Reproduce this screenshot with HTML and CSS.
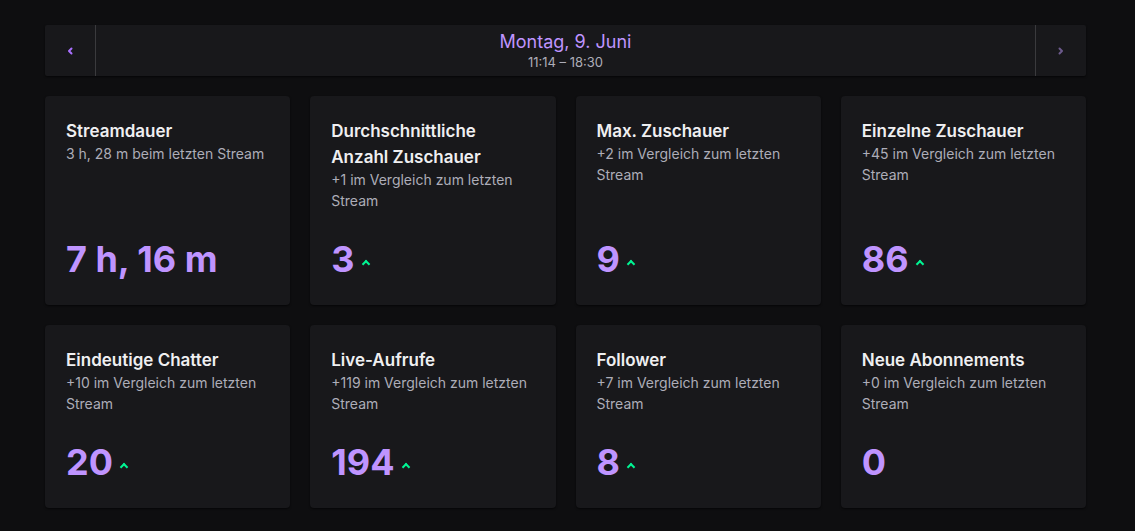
FILE: index.html
```html
<!DOCTYPE html>
<html lang="de">
<head>
    <meta charset="UTF-8">
    <meta name="viewport" content="width=device-width, initial-scale=1.0">
    <title>Stream-Zusammenfassung</title>
    <link rel="stylesheet" href="styles.css">
</head>
<body>
    <div class="page">
        <div class="date-bar">
            <button class="nav-btn">
                <svg width="8" height="8" viewBox="0 0 8 8"><path d="M5.5 1.5 3 4l2.5 2.5" fill="none" stroke="currentColor" stroke-width="2" stroke-linecap="round" stroke-linejoin="round"/></svg>
            </button>
            <div class="date-info">
                <div class="date-title">Montag, 9. Juni</div>
                <div class="date-time">11:14 – 18:30</div>
            </div>
            <button class="nav-btn disabled">
                <svg width="8" height="8" viewBox="0 0 8 8"><path d="M2.5 1.5 5 4 2.5 6.5" fill="none" stroke="currentColor" stroke-width="2" stroke-linecap="round" stroke-linejoin="round"/></svg>
            </button>
        </div>

        <div class="stats">
            <div class="card">
                <div class="card-head">
                    <h3>Streamdauer</h3>
                    <p>3 h, 28 m beim letzten Stream</p>
                </div>
                <div class="value">7 h, 16 m</div>
            </div>
            <div class="card">
                <div class="card-head">
                    <h3>Durchschnittliche Anzahl Zuschauer</h3>
                    <p>+1 im Vergleich zum letzten Stream</p>
                </div>
                <div class="value">3 <span class="up"></span></div>
            </div>
            <div class="card">
                <div class="card-head">
                    <h3>Max. Zuschauer</h3>
                    <p>+2 im Vergleich zum letzten Stream</p>
                </div>
                <div class="value">9 <span class="up"></span></div>
            </div>
            <div class="card">
                <div class="card-head">
                    <h3>Einzelne Zuschauer</h3>
                    <p>+45 im Vergleich zum letzten Stream</p>
                </div>
                <div class="value">86 <span class="up"></span></div>
            </div>
            <div class="card">
                <div class="card-head">
                    <h3>Eindeutige Chatter</h3>
                    <p>+10 im Vergleich zum letzten Stream</p>
                </div>
                <div class="value">20 <span class="up"></span></div>
            </div>
            <div class="card">
                <div class="card-head">
                    <h3>Live-Aufrufe</h3>
                    <p>+119 im Vergleich zum letzten Stream</p>
                </div>
                <div class="value">194 <span class="up"></span></div>
            </div>
            <div class="card">
                <div class="card-head">
                    <h3>Follower</h3>
                    <p>+7 im Vergleich zum letzten Stream</p>
                </div>
                <div class="value">8 <span class="up"></span></div>
            </div>
            <div class="card">
                <div class="card-head">
                    <h3>Neue Abonnements</h3>
                    <p>+0 im Vergleich zum letzten Stream</p>
                </div>
                <div class="value">0</div>
            </div>
        </div>
    </div>
</body>
</html>
```

FILE: styles.css
```css
body {
    margin: 0;
    font-family: Inter, "Noto Sans", sans-serif;
    background-color: #0e0e10;
    color: #efeff1;
}
.page {
    padding: 25px 49px 20px 45px;
}
.date-bar {
    display: flex;
    height: 51px;
    background-color: #18181b;
    border-radius: 2px;
    box-shadow: 0 1px 2px rgba(0, 0, 0, 0.6);
}
.nav-btn {
    width: 51px;
    border: none;
    background: none;
    padding: 0;
    color: #a970ff;
    display: flex;
    justify-content: center;
    align-items: center;
    cursor: pointer;
}
.nav-btn:first-child {
    border-right: 1px solid #3a3a3d;
}
.nav-btn:last-child {
    border-left: 1px solid #3a3a3d;
}
.nav-btn.disabled {
    color: #6c5a8c;
    cursor: default;
}
.date-info {
    flex: 1;
    text-align: center;
    padding-top: 6px;
}
.date-title {
    font-size: 18px;
    line-height: 22px;
    color: #bf94ff;
}
.date-time {
    font-size: 13px;
    line-height: 18px;
    color: #adadb8;
}
.stats {
    margin-top: 20px;
    display: grid;
    grid-template-columns: repeat(4, 1fr);
    gap: 20px;
}
.card {
    display: flex;
    flex-direction: column;
    justify-content: space-between;
    gap: 26px;
    background-color: #18181b;
    border-radius: 4px;
    padding: 22px 21px 24px 21px;
    box-shadow: 0 1px 2px rgba(0, 0, 0, 0.6);
}
.card h3 {
    margin: 0;
    font-size: 17px;
    font-weight: 600;
    line-height: 26px;
    color: #efeff1;
}
.card p {
    margin: 0;
    font-size: 14px;
    line-height: 20.5px;
    color: #adadb8;
}
.value {
    display: flex;
    align-items: center;
    gap: 8px;
    font-size: 36px;
    font-weight: 700;
    line-height: 44px;
    color: #bf94ff;
}
.up {
    width: 4px;
    height: 4px;
    margin-top: 9px;
    border-top: 2px solid #00f593;
    border-left: 2px solid #00f593;
    transform: rotate(45deg);
}
```
